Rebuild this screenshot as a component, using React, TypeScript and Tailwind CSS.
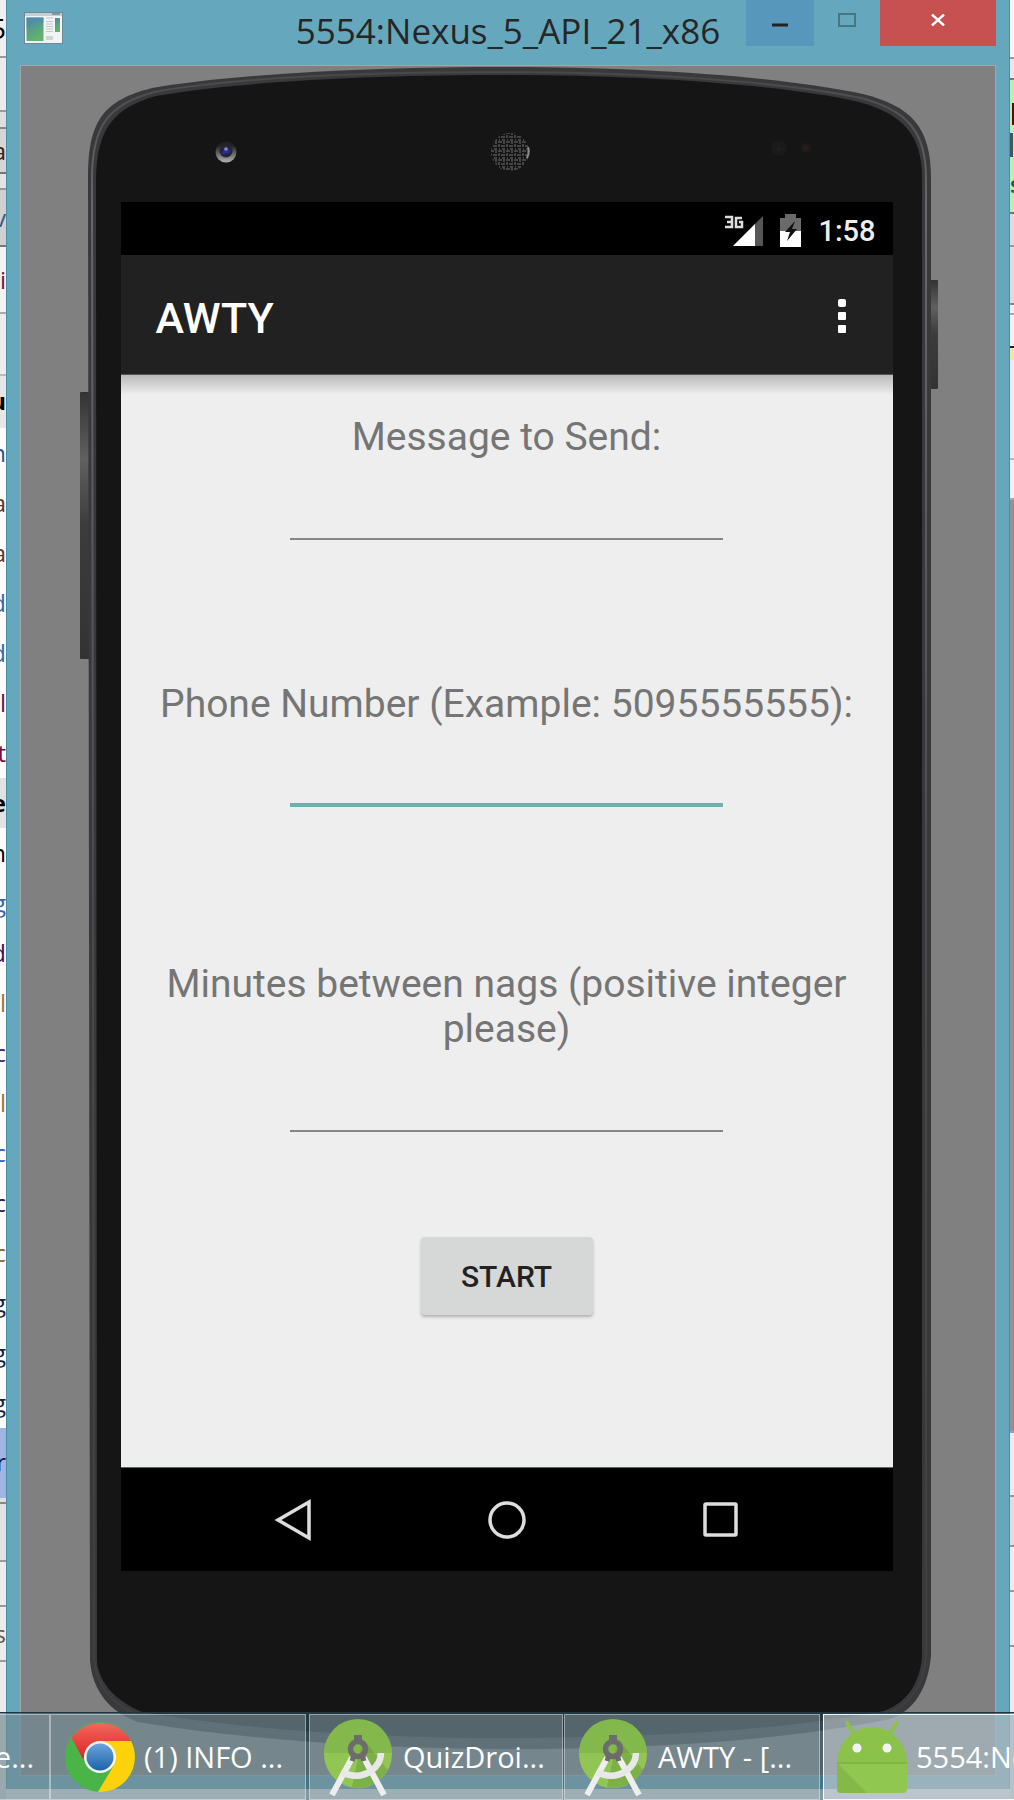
import React, { useState } from "react";

type Row = { h: string; bg: string; text?: string; cls?: string };

const leftRows: Row[] = [
  { h: "h-[58px]", bg: "bg-[#f0f0f0] border-[#999]", text: "5", cls: "text-black text-[28px]" },
  { h: "h-[54px]", bg: "bg-[#ebebeb] border-[#999]" },
  { h: "h-[17px]", bg: "bg-[#dedede] border-[#888]" },
  { h: "h-[45px]", bg: "bg-[#d6d6d6] border-[#777]", text: "a", cls: "text-[#332211]" },
  { h: "h-[16px]", bg: "bg-[#e4e4e4] border-[#999]" },
  { h: "h-[57px]", bg: "bg-[#d0d0d0] border-[#777]", text: "v", cls: "text-[#345a8a]" },
  { h: "h-[67px]", bg: "bg-[#f2f2f2] border-[#aaa]", text: "i", cls: "text-[#7a1040]" },
  { h: "h-[62px]", bg: "bg-[#ececec] border-[#bbb]" },
  { h: "h-[52px]", bg: "bg-[#e6e6e6] border-transparent", text: "u", cls: "text-black font-bold" },
];

const listRows: [string, string][] = [
  ["n", "text-[#2c4f8c]"], ["a", "text-[#663322]"], ["a", "text-[#663322]"], ["d", "text-[#3366aa]"],
  ["d", "text-[#3366aa]"], ["l", "text-[#6b1040]"], ["t", "text-[#6b1040]"],
  ["e", "text-black font-bold bg-[#e2e2e2]"], ["n", "text-black"], ["g", "text-[#3366aa]"],
  ["d", "text-[#3a1060]"], ["l", "text-[#997733]"], ["c", "text-[#442266]"], ["l", "text-[#997733]"],
  ["c", "text-[#3366aa]"], ["c", "text-[#222244]"], ["c", "text-[#886633]"], ["g", "text-[#112244]"],
  ["g", "text-[#112244]"], ["g", "text-[#112244]"],
];

function Strip({ rows }: { rows: Row[] }) {
  return (
    <>
      {rows.map((r, i) => (
        <div key={i} className={`flex shrink-0 items-center justify-end overflow-hidden border-b-2 ${r.h} ${r.bg}`}>
          <span className={r.cls}>{r.text}</span>
        </div>
      ))}
    </>
  );
}

function LeftBackdrop() {
  return (
    <div aria-hidden="true" className="flex w-[6px] shrink-0 flex-col overflow-hidden bg-white text-[24px]">
      <Strip rows={leftRows} />
      {listRows.map(([t, c], i) => (
        <div key={i} className={`flex h-[50px] shrink-0 items-center justify-end overflow-hidden ${c}`}>{t}</div>
      ))}
      <Strip
        rows={[
          { h: "h-[70px]", bg: "bg-[#9fb6e3] border-[#9fb6e3]", text: "r", cls: "text-[#221144]" },
          { h: "h-[6px]", bg: "bg-[#e0e0e0] border-[#888]" },
          { h: "h-[58px]", bg: "bg-[#e2e2e2] border-[#999]" },
          { h: "h-[45px]", bg: "bg-[#ececec] border-[#999]" },
          { h: "h-[55px]", bg: "bg-[#ececec] border-[#999]", text: "s", cls: "text-[#555]" },
          { h: "h-[160px]", bg: "bg-[#ebebeb] border-[#999]" },
        ]}
      />
    </div>
  );
}

function RightBackdrop() {
  return (
    <div aria-hidden="true" className="flex w-[4px] shrink-0 flex-col overflow-hidden bg-white text-[24px] font-bold">
      <Strip
        rows={[
          { h: "h-[59px]", bg: "bg-[#f6f6f6] border-[#999]" },
          { h: "h-[21px]", bg: "bg-[#e8e8e8] border-[#777]" },
        ]}
      />
      <div className="flex h-[134px] shrink-0 flex-col border-b-2 border-[#777] bg-[#bdecb8]">
        <div className="mt-[23px] ml-[2px] h-[22px] shrink-0 bg-[#5a0c0c]" />
        <div className="mt-[8px] h-[24px] w-[3px] shrink-0 bg-[#445566]" />
        <div className="mt-[12px] leading-[30px] text-[#225566]">s</div>
      </div>
      <Strip
        rows={[
          { h: "h-[33px]", bg: "bg-[#dcdcdc] border-[#999]" },
          { h: "h-[58px]", bg: "bg-[#dcdcdc] border-[#888]" },
          { h: "h-[10px]", bg: "bg-[#eee] border-[#aaa]" },
          { h: "h-[33px]", bg: "bg-[#f2f2f2] border-[#222]" },
          { h: "h-[12px]", bg: "bg-[#eee8a8] border-[#eee8a8]" },
          { h: "h-[100px]", bg: "bg-[#ececec] border-[#bbb]" },
          { h: "h-[40px]", bg: "bg-[#f0f0f0] border-[#aaa]" },
          { h: "h-[933px]", bg: "bg-[#929292] border-[#8da4d0]" },
          { h: "h-[64px]", bg: "bg-[#ececec] border-[#999]" },
          { h: "h-[50px]", bg: "bg-[#dedede] border-[#999]" },
          { h: "h-[45px]", bg: "bg-[#ececec] border-[#999]" },
          { h: "h-[55px]", bg: "bg-[#ececec] border-[#999]" },
          { h: "h-[160px]", bg: "bg-[#ebebeb] border-[#999]" },
        ]}
      />
    </div>
  );
}

function WindowIcon() {
  return (
    <svg viewBox="0 0 39 32" className="h-[32px] w-[39px]" aria-hidden="true">
      <defs>
        <linearGradient id="win" x1="0" y1="0" x2="0.4" y2="1">
          <stop offset="0" stopColor="#4b87a8" />
          <stop offset="1" stopColor="#62b46c" />
        </linearGradient>
      </defs>
      <rect x="0.5" y="0.5" width="38" height="31" fill="#f1f3f4" stroke="#6d8a96" />
      <rect x="1" y="1" width="37" height="3" fill="#c5ced4" />
      <rect x="28" y="1" width="8" height="2" fill="#8a98a0" />
      <rect x="2.5" y="5.5" width="17" height="23.5" fill="url(#win)" />
      <path d="M2.5 17C6 12 12 11 19.5 10V5.500H2.500z" fill="#4c8cb4" opacity="0.6" />
      <path d="M22 6h7M22 9.500h7M22 12h7M22 14.500h7M22 17h7M22 19.500h7" stroke="#c3c7c9" />
      <rect x="22" y="24" width="7" height="4" fill="#d0d3d5" />
      <rect x="31" y="6" width="5" height="14" fill="url(#win)" />
    </svg>
  );
}

function TitleBar() {
  return (
    <header className="relative flex h-[65px] shrink-0 items-start justify-between pl-[17px] pr-[13px]">
      <div className="pt-[12px]"><WindowIcon /></div>
      <h1 className="absolute inset-x-0 top-[7px] text-center font-['Open_Sans',sans-serif] text-[35px] leading-[48px] text-[#262626]">
        5554:Nexus_5_API_21_x86
      </h1>
      <div className="relative flex h-[46px]">
        <button aria-label="Minimize" className="flex w-[68px] items-center justify-center bg-[#5897bc]">
          <svg viewBox="0 0 16 6" className="mt-[4px] h-[6px] w-[16px]"><rect y="1.5" width="16" height="3" fill="#222" /></svg>
        </button>
        <button aria-label="Maximize" className="flex w-[66px] items-center justify-center">
          <svg viewBox="0 0 18 14" className="-mt-[6px] h-[14px] w-[18px]"><rect x="1" y="1" width="16" height="12" fill="none" stroke="#477584" strokeWidth="2" /></svg>
        </button>
        <button aria-label="Close" className="flex w-[116px] items-center justify-center bg-[#c75050]">
          <svg viewBox="0 0 14 12" className="-mt-[6px] h-[12px] w-[14px]"><path d="M1 0.500L13 11.500M13 0.500L1 11.500" stroke="#fff" strokeWidth="2.4" /></svg>
        </button>
      </div>
    </header>
  );
}

function PhoneShell() {
  return (
    <svg viewBox="0 0 861 1684" preserveAspectRatio="none" className="absolute inset-y-0 -left-[9px] h-full w-[861px] max-w-none" aria-hidden="true">
      <defs>
        <linearGradient id="btn" x1="0" y1="0" x2="0" y2="1">
          <stop offset="0" stopColor="#333" />
          <stop offset="0.25" stopColor="#606060" />
          <stop offset="0.5" stopColor="#3c3c3c" />
          <stop offset="1" stopColor="#333" />
        </linearGradient>
        <linearGradient id="rim" x1="0" y1="0" x2="0" y2="1">
          <stop offset="0" stopColor="#48484a" />
          <stop offset="0.08" stopColor="#68686c" />
          <stop offset="0.5" stopColor="#4a4a4e" />
          <stop offset="1" stopColor="#3e3e40" />
        </linearGradient>
      </defs>
      <rect x="2" y="326" width="10" height="267" rx="1" fill="url(#btn)" />
      <rect x="851" y="214" width="9" height="109" rx="1" fill="url(#btn)" />
      <path d="M10 110C10 52 28 34 74 22C170 6 310 1 429 1C560 1 700 10 785 28C832 40 853 60 853 112V1590C850 1622 836 1645 812 1653C700 1676 560 1683 430 1683C300 1683 170 1674 60 1656C32 1646 14 1625 12 1594z" fill="#39393b" />
      <path d="M14 112C14 58 32 38 76 26C170 9 310 6 429 6C560 6 700 15 783 32C828 44 848 64 848 112V1590C846 1620 831 1640 808 1648C700 1669 560 1676 430 1676C300 1676 170 1668 62 1650C36 1640 18 1620 16 1594z" fill="none" stroke="url(#rim)" strokeWidth="2" />
      <path d="M18 112C19 62 36 42 78 30C170 14 310 9 429 9C560 9 700 18 781 36C824 48 844 68 844 112V1590C842 1618 828 1637 806 1645C700 1665 560 1672 430 1672C300 1672 170 1664 64 1646C40 1636 20 1618 19 1594z" fill="#151515" />
    </svg>
  );
}

function Sensors() {
  return (
    <div className="relative flex h-[136px] shrink-0 items-start pt-[70px] pl-[127px]" aria-hidden="true">
      <svg viewBox="0 0 24 24" className="mt-[4px] size-[24px]">
        <defs>
          <linearGradient id="cam" x1="0" y1="0" x2="0" y2="1">
            <stop offset="0.2" stopColor="#222" />
            <stop offset="1" stopColor="#b5b2b2" />
          </linearGradient>
        </defs>
        <circle cx="12" cy="12" r="10.5" fill="url(#cam)" />
        <circle cx="12" cy="11" r="6.5" fill="#25253a" />
        <path d="M7 14L12 7L17 12L11 14z" fill="#2a2aa5" />
        <circle cx="12" cy="9" r="1.8" fill="#7e96ad" />
      </svg>
      <svg viewBox="0 0 40 40" className="-mt-[4px] ml-[252px] size-[40px]">
        <defs>
          <pattern id="mesh" width="8" height="9" patternUnits="userSpaceOnUse">
            <path d="M0 1h4M1 3v3M3 5h4M6 0v3M4 8h3M1 8h1" stroke="#747474" fill="none" />
          </pattern>
        </defs>
        <circle cx="20" cy="20" r="19" fill="url(#mesh)" />
        <path d="M38 15Q40 20 37 26" fill="none" stroke="#8a8a8a" strokeWidth="2" />
      </svg>
      <svg viewBox="0 0 44 20" className="mt-[2px] ml-[239px] h-[20px] w-[44px]">
        <circle cx="10" cy="10" r="8" fill="#1b1a1a" />
        <circle cx="37" cy="10" r="5" fill="#1d1a1a" />
        <circle cx="10" cy="11" r="2" fill="#261c1c" />
        <circle cx="37" cy="10" r="2" fill="#2a1d1d" />
      </svg>
    </div>
  );
}

function StatusBar() {
  return (
    <div className="flex h-[53px] shrink-0 items-center justify-end bg-black pt-[4px] pr-[17px] text-white">
      <svg viewBox="0 0 40 32" className="h-[32px] w-[40px]" role="img" aria-label="3G signal">
        <path d="M1 2h7v10H1M3 7h5" fill="none" stroke="#ddd" strokeWidth="2.5" />
        <path d="M18 3h-6v9h6V7h-3" fill="none" stroke="#ddd" strokeWidth="2.5" />
        <path d="M39 1V31H9z" fill="#555" />
        <path d="M31 9V31H9z" fill="#fff" />
      </svg>
      <svg viewBox="0 0 21 33" className="ml-[16px] h-[33px] w-[21px]" role="img" aria-label="Battery charging">
        <path d="M0 4h5V0h11v4h5v29H0z" fill="#6a6a6a" />
        <rect y="17" width="21" height="16" fill="#fff" />
        <path d="M15 7L5 18h5L7 27L17 15h-5z" fill="#111" />
      </svg>
      <time className="ml-[17px] font-[Roboto,sans-serif] text-[29px] leading-[32px] font-medium text-[#eee]">1:58</time>
    </div>
  );
}

type FieldProps = { id: string; label: string; type: string; className?: string; focused?: boolean };

function Field({ id, label, type, className = "", focused }: FieldProps) {
  const [value, setValue] = useState("");
  return (
    <div className={`flex flex-col items-center ${className}`}>
      <label htmlFor={id} className="px-8 text-center text-[39px] leading-[45px] text-[#757575]">{label}</label>
      <input
        id={id}
        type={type}
        value={value}
        onChange={(e) => setValue(e.target.value)}
        className={`mt-[18px] h-[62px] w-[56%] bg-transparent text-center text-[39px] outline-none ${focused ? "border-b-4 border-[#6fb0ac]" : "border-b-2 border-[#868686]"}`}
      />
    </div>
  );
}

function Screen() {
  return (
    <main className="relative mr-[37px] ml-[34px] flex shrink-0 flex-col bg-[#eee] font-[Roboto,sans-serif]">
      <StatusBar />
      <div className="relative flex h-[120px] shrink-0 items-center justify-between overflow-visible border-b border-[#555] bg-[#212121] pr-[28px] pl-[35px]">
        <h2 className="pt-[6px] text-[43px] leading-[50px] font-medium text-white">AWTY</h2>
        <button aria-label="More options" className="flex h-[60px] w-[46px] items-center justify-center pt-[2px]">
          <svg viewBox="0 0 10 36" className="h-[36px] w-[10px] fill-white">
            <rect x="1" y="1" width="8" height="8" rx="2" />
            <rect x="1" y="14" width="8" height="8" rx="1" />
            <rect x="1" y="27" width="8" height="8" rx="1" />
          </svg>
        </button>
        <div className="absolute inset-x-0 top-full mt-px h-[20px] bg-linear-to-b from-black/22 to-transparent" />
      </div>
      <form className="flex h-[1092px] flex-col items-center pt-[40px]" onSubmit={(e) => e.preventDefault()}>
        <Field id="message" label="Message to Send:" type="text" className="w-full" />
        <Field id="phone" label="Phone Number (Example: 5095555555):" type="tel" className="mt-[142px] w-full" focused />
        <Field id="minutes" label="Minutes between nags (positive integer please)" type="text" className="mt-[155px] w-full" />
        <button type="submit" className="mt-[105px] h-[78px] w-[172px] rounded-[4px] bg-[#d6d7d7] text-[30px] font-medium text-[#222] shadow-[0_2px_3px_rgba(0,0,0,0.25)]">
          START
        </button>
      </form>
      <nav className="flex h-[104px] shrink-0 items-center justify-center gap-[174px] border-t border-[#5d6664] bg-black">
        <button aria-label="Back"><svg viewBox="0 0 40 44" className="h-[44px] w-[40px]"><path d="M36 4V40L5 22z" fill="none" stroke="#ddd" strokeWidth="3.5" /></svg></button>
        <button aria-label="Home"><svg viewBox="0 0 40 40" className="size-[40px]"><circle cx="20" cy="20" r="17" fill="none" stroke="#ddd" strokeWidth="3.5" /></svg></button>
        <button aria-label="Overview"><svg viewBox="0 0 40 40" className="size-[40px]"><rect x="4" y="4" width="31" height="31" rx="1" fill="none" stroke="#ddd" strokeWidth="3.5" /></svg></button>
      </nav>
    </main>
  );
}

function ChromeIcon() {
  return (
    <svg viewBox="0 0 72 72" className="size-[72px] shrink-0" aria-hidden="true">
      <defs>
        <linearGradient id="cr" x1="0" y1="0" x2="0" y2="1"><stop offset="0" stopColor="#f0685c" /><stop offset="1" stopColor="#df2227" /></linearGradient>
        <linearGradient id="cb" x1="0" y1="0" x2="0" y2="1"><stop offset="0" stopColor="#6ba3dc" /><stop offset="1" stopColor="#1c64a8" /></linearGradient>
      </defs>
      <circle cx="36" cy="36" r="35" fill="#4bb449" />
      <path d="M7.500 17A35 35 0 0 1 67 20L36 20L19 38z" fill="url(#cr)" />
      <path d="M67 20A35 35 0 0 1 34 71L50 44L36 20z" fill="#fdd20a" />
      <circle cx="36" cy="36" r="16" fill="#f4f4f4" />
      <circle cx="36" cy="36" r="13.5" fill="url(#cb)" />
    </svg>
  );
}

function StudioIcon() {
  return (
    <svg viewBox="0 0 72 78" className="h-[78px] w-[72px] shrink-0" aria-hidden="true">
      <circle cx="35" cy="36" r="34" fill="#92c654" />
      <path d="M1 35A34 34 0 0 1 69 35z" fill="#83b84c" />
      <path d="M41 22L65 52A34 34 0 0 1 29 69L35 40z" fill="#5f8f38" opacity="0.4" />
      <path d="M31 26v-9h8v9z" fill="#6c6c6c" />
      <circle cx="35" cy="31" r="7.5" fill="none" stroke="#6c6c6c" strokeWidth="5.5" />
      <path d="M29 40L9 77M41 40L61 77" stroke="#eee" strokeWidth="6" />
      <path d="M31 37l-2 6M39 37l2 6" stroke="#6c6c6c" strokeWidth="5" />
      <path d="M18 54Q35 62 48 53Q58 46 58 35" fill="none" stroke="#e8e8e8" strokeWidth="6.5" />
    </svg>
  );
}

function AndroidIcon() {
  return (
    <svg viewBox="0 0 72 74" className="h-[74px] w-[72px] shrink-0" aria-hidden="true">
      <path d="M11 3L19 15M61 3L53 15" stroke="#8bc34a" strokeWidth="4" strokeLinecap="round" />
      <path d="M1 43A35 36 0 0 1 71 43z" fill="#8bc34a" />
      <path d="M1 43H71V69Q71 73 67 73H5Q1 73 1 69z" fill="#8fc750" />
      <path d="M1 43L31 73H5Q1 73 1 69z" fill="#84b947" />
      <path d="M1 43H71" stroke="#76a83e" />
      <circle cx="21" cy="28" r="4.5" fill="#f3f3f3" />
      <circle cx="51" cy="28" r="4.5" fill="#f3f3f3" />
    </svg>
  );
}

function Task({ icon, label, className }: { icon?: React.ReactNode; label: string; className: string }) {
  return (
    <button className={`flex h-[86px] shrink-0 items-center gap-[8px] overflow-hidden border text-[29px] whitespace-nowrap text-white ${className}`}>
      {icon}
      <span className="leading-[40px]">{label}</span>
    </button>
  );
}

function TaskBar() {
  return (
    <footer className="absolute inset-x-0 bottom-0 flex h-[88px] items-start overflow-hidden border-t border-[#203640] bg-[#2f5462]/60 pt-px font-['Open_Sans',sans-serif]">
      <Task label="e..." className="w-[50px] justify-end border-l-0 border-white/40 bg-white/22 pr-[15px]" />
      <Task icon={<ChromeIcon />} label="(1) INFO ..." className="w-[256px] border-white/40 bg-white/22 pl-[13px]" />
      <Task icon={<StudioIcon />} label="QuizDroi..." className="ml-[3px] w-[254px] border-white/40 bg-white/22 pl-[13px]" />
      <Task icon={<StudioIcon />} label="AWTY - [..." className="ml-px w-[256px] border-white/40 bg-white/22 pl-[13px]" />
      <Task icon={<AndroidIcon />} label="5554:Nexus_5" className="ml-[3px] w-[256px] border-white/90 bg-white/45 pl-[12px]" />
    </footer>
  );
}

export default function App() {
  return (
    <div className="relative flex h-screen overflow-hidden bg-white font-['Open_Sans',sans-serif]">
      <LeftBackdrop />
      <section className="mb-[11px] flex min-w-0 flex-1 flex-col border-x border-[#4c8ba1] bg-[#65a8be] pb-[13px]">
        <TitleBar />
        <div className="mx-[13px] flex min-h-0 flex-1 justify-center border border-[#a0a8a8] bg-[#808080]">
          <div className="relative h-[1684px] w-[843px]">
            <PhoneShell />
            <Sensors />
            <Screen />
          </div>
        </div>
      </section>
      <RightBackdrop />
      <TaskBar />
    </div>
  );
}
